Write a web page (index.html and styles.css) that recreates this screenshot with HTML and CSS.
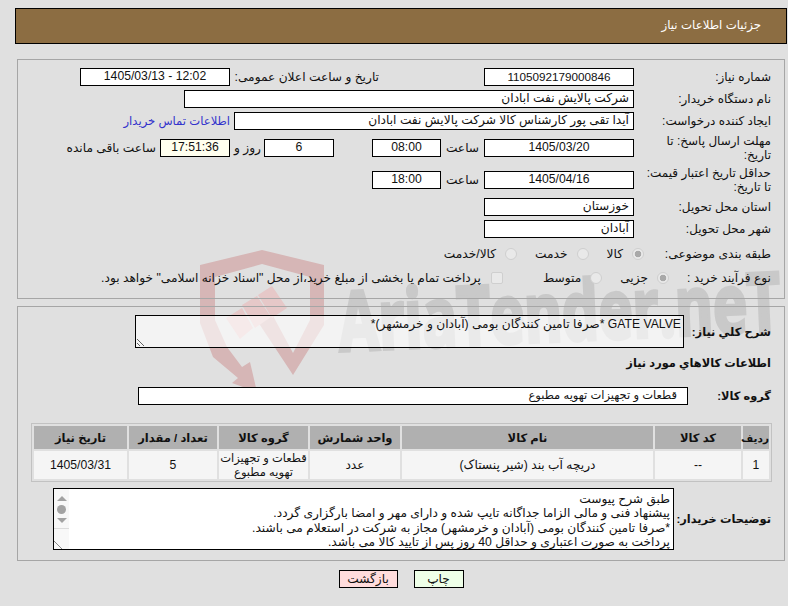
FILE: index.html
```html
<!DOCTYPE html>
<html lang="fa" dir="rtl">
<head>
<meta charset="utf-8">
<title>جزئیات اطلاعات نیاز</title>
<link rel="stylesheet" href="styles.css">
</head>
<body>
<svg class="watermark" width="788" height="606" viewBox="0 0 788 606" aria-hidden="true">
  <path class="wm-shield" d="M262 250 L324 265 L324 325 L293 375 L258 322 L272 314 L293 353 L310 320 L310 277 L262 264 L215 277 L215 320 L227 347 L242 367 L250 362 L257 392 L232 383 L238 378 L213 357 L200 323 L200 265 Z"/>
  <path class="wm-hammer" d="M226 318 L242 308 L253 328 L240 339 Z M242 305 L257 296 L271 317 L255 328 Z M258 295 L272 286 L287 308 L272 318 Z"/>
  <text class="wm-text" x="340" y="351" transform="rotate(-2.6 340 351)" textLength="442" lengthAdjust="spacingAndGlyphs">AriaTender.neT</text>
</svg>
<main class="page">
  <header class="title-bar">جزئیات اطلاعات نیاز</header>

  <section class="panel panel-info">
    <div class="row">
      <div class="label w137">شماره نیاز:</div>
      <div class="field w150 center long-number">1105092179000846</div>
      <div class="label announce">تاریخ و ساعت اعلان عمومی:</div>
      <div class="field w150 center announce-value">1405/03/13 - 12:02</div>
    </div>
    <div class="row">
      <div class="label w137">نام دستگاه خریدار:</div>
      <div class="field w450">شرکت پالایش نفت ابادان</div>
    </div>
    <div class="row">
      <div class="label w137">ایجاد کننده درخواست:</div>
      <div class="field w400">آیدا تقی پور کارشناس کالا شرکت پالایش نفت ابادان</div>
      <a class="contact" href="#">اطلاعات تماس خریدار</a>
    </div>
    <div class="row tall">
      <div class="label w137">مهلت ارسال پاسخ: تا تاریخ:</div>
      <div class="field w150 center">1405/03/20</div>
      <div class="unit">ساعت</div>
      <div class="field w69 center">08:00</div>
      <div class="field w70 center days">6</div>
      <div class="unit days-unit">روز و</div>
      <div class="field w70 center timer">17:51:36</div>
      <div class="unit remain">ساعت باقی مانده</div>
    </div>
    <div class="row tall">
      <div class="label w137">حداقل تاریخ اعتبار قیمت: تا تاریخ:</div>
      <div class="field w150 center">1405/04/16</div>
      <div class="unit">ساعت</div>
      <div class="field w69 center">18:00</div>
    </div>
    <div class="row">
      <div class="label w137">استان محل تحویل:</div>
      <div class="field w150">خوزستان</div>
    </div>
    <div class="row">
      <div class="label w137">شهر محل تحویل:</div>
      <div class="field w150">آبادان</div>
    </div>
    <div class="row choice-row category">
      <div class="label choice-label-a">طبقه بندی موضوعی:</div>
      <label class="choice"><input class="radio" type="radio" name="cat" checked disabled><span>کالا</span></label>
      <label class="choice"><input class="radio" type="radio" name="cat" disabled><span>خدمت</span></label>
      <label class="choice"><input class="radio" type="radio" name="cat" disabled><span>کالا/خدمت</span></label>
    </div>
    <div class="row choice-row process">
      <div class="label choice-label-b">نوع فرآیند خرید :</div>
      <label class="choice"><input class="radio" type="radio" name="proc" checked disabled><span>جزیی</span></label>
      <label class="choice"><input class="radio" type="radio" name="proc" disabled><span>متوسط</span></label>
      <label class="choice pay"><input class="check" type="checkbox" disabled><span>پرداخت تمام یا بخشی از مبلغ خرید،از محل "اسناد خزانه اسلامی" خواهد بود.</span></label>
    </div>
  </section>

  <section class="panel panel-items">
    <div class="row need-row">
      <div class="label strong need-label">شرح کلي نياز:</div>
      <textarea class="need" readonly>GATE VALVE *صرفا تامین کنندگان بومی (آبادان و خرمشهر)*</textarea>
    </div>
    <h2 class="items-title">اطلاعات کالاهاي مورد نياز</h2>
    <div class="row group-row">
      <div class="label strong group-label">گروه کالا:</div>
      <div class="field group-field">قطعات و تجهیزات تهویه مطبوع</div>
    </div>
    <table class="items">
      <thead>
        <tr>
          <th class="c1">ردیف</th><th class="c2">کد کالا</th><th class="c3">نام کالا</th><th class="c4">واحد شمارش</th><th class="c5">گروه کالا</th><th class="c6">تعداد / مقدار</th><th class="c7">تاریخ نیاز</th>
        </tr>
      </thead>
      <tbody>
        <tr>
          <td>1</td><td>--</td><td>دریچه آب بند (شیر پنستاک)</td><td>عدد</td><td class="group-cell">قطعات و تجهیزات<br>تهویه مطبوع</td><td>5</td><td>1405/03/31</td>
        </tr>
      </tbody>
    </table>
    <div class="row desc-row">
      <div class="label strong desc-label">توضیحات خریدار:</div>
      <div class="desc">
        <div class="desc-text">طبق شرح پیوست<br>پیشنهاد فنی و مالی الزاما جداگانه تایپ شده و دارای مهر و امضا بارگزاری گردد.<br>*صرفا تامین کنندگان بومی (آبادان و خرمشهر) مجاز به شرکت در استعلام می باشند.<br>پرداخت به صورت اعتباری و حداقل 40 روز پس از تایید کالا می باشد.</div>
        <div class="scrollbar">
          <span class="arrow-up"></span>
          <span class="thumb"></span>
          <span class="arrow-down"></span>
          <span class="grip"></span>
        </div>
      </div>
    </div>
  </section>

  <div class="actions">
    <button class="btn print" type="button">چاپ</button>
    <button class="btn back" type="button">بازگشت</button>
  </div>
</main>
</body>
</html>
```
FILE: styles.css
```css
* { box-sizing: border-box; }
html, body { margin: 0; padding: 0; }
body {
  background: #e0e0e0;
  color: #111;
  font-family: "Liberation Sans", "DejaVu Sans", sans-serif;
  font-size: 12.2px;
  line-height: 14px;
  width: 788px;
  height: 606px;
  overflow: hidden;
  position: relative;
}
.watermark { position: absolute; left: 0; top: 0; z-index: 0; }
.wm-shield { fill: #d6b6b6; }
.wm-hammer { fill: #e6c8c8; }
.wm-text { fill: #c9c9c9; stroke: #c9c9c9; stroke-width: 4px; font-family: "Open Sans", sans-serif; font-weight: 700; font-size: 82px; direction: ltr; }
.page { position: relative; z-index: 1; }

.title-bar {
  margin: 8px 1px 0 15px;
  height: 36px;
  background: #8c6d42;
  border: 1px solid #000;
  color: #fff;
  padding-right: 25px;
  line-height: 33px;
  font-size: 11.8px;
}
.panel { border: 1px solid #a6a6a6; margin: 0 3px 0 17px; padding: 0 13px 0 0; }
.panel-info { margin-top: 15px; height: 240px; padding-top: 8px; }
.panel-items { margin-top: 7px; height: 255px; padding-top: 8px; }

.row { display: flex; align-items: center; min-height: 18px; margin-bottom: 4px; }
.row.tall { min-height: 28px; }
.label { flex: none; }
.w137 { width: 137px; padding-left: 8px; font-size: 12px; }
.field {
  flex: none;
  height: 18px;
  background: #fff;
  border: 1px solid #000;
  line-height: 15px;
  padding: 0 4px;
  white-space: nowrap;
  overflow: hidden;
}
.center { text-align: center; }
.long-number { font-size: 11.7px; }
.w150 { width: 150px; }
.w400 { width: 400px; }
.w450 { width: 450px; }
.w69 { width: 69px; }
.w70 { width: 70px; }
.announce { margin-right: 105px; width: 149px; white-space: nowrap; }
.announce-value { direction: ltr; }
.contact { color: #3333cc; text-decoration: none; margin-right: 4px; white-space: nowrap; font-size: 11.6px; }
.unit { width: 43px; text-align: center; flex: none; white-space: nowrap; }
.days { margin-right: 38px; }
.days-unit { width: 34px; text-align: right; padding-right: 3px; }
.timer { background: #ffffef; }
.remain { width: 94px; text-align: right; padding-right: 4px; }

.choice-row { margin-bottom: 0; }
.category { height: 24px; margin-top: 1px; }
.process { height: 24px; }
.choice-label-a { width: 127px; white-space: nowrap; }
.choice-label-b { width: 102px; white-space: nowrap; }
.choice { display: flex; align-items: center; gap: 9px; margin-left: 18px; white-space: nowrap; }
.pay { margin-right: 22px; margin-left: 0; gap: 10px; }
.radio, .check {
  appearance: none;
  margin: 0;
  flex: none;
  width: 12px;
  height: 12px;
  border: 1px solid #cfcfcf;
  background: #e9e9e9;
}
.radio { border-radius: 50%; }
.radio:checked { background: radial-gradient(circle, #a9a9a9 0 3px, #e9e9e9 3.6px); }
.check { border-radius: 2px; }

.need-row { margin-bottom: 0; min-height: 33px; }
.need-label { width: 87px; white-space: nowrap; }
.need {
  display: block;
  width: 549px;
  height: 33px;
  margin: 0;
  padding: 1px 2px;
  border: 1px solid #000;
  border-radius: 0;
  background: rgba(255, 255, 255, 0.62);
  color: #111;
  font: inherit;
  outline: 0;
}
.strong { font-weight: 700; font-size: 11.4px; }
.items-title { margin: 8px 0 0; font-size: 11.4px; font-weight: 700; line-height: 14px; }
.group-row { margin: 17px 0 0; }
.group-label { width: 83px; }
.group-field { width: 550px; padding-right: 10px; font-size: 11.5px; }

.items {
  width: 740px;
  margin: 18px -1px 0 0;
  border: 1px solid #c2c2c2;
  border-spacing: 2px;
  table-layout: fixed;
}
.items th { background: #b0b0b0; height: 23px; padding: 0; font-weight: 700; font-size: 11.5px; }
.items td { background: #f5f5f5; height: 28px; padding: 0; text-align: center; }
.items .group-cell { font-size: 11.5px; white-space: nowrap; }
.items .c1 { font-size: 10.5px; }
.c1 { width: 26px; } .c2 { width: 86px; } .c3 { width: 251px; } .c4 { width: 90px; }
.c5 { width: 89px; } .c6 { width: 88px; } .c7 { width: 93px; }

.desc-row { margin: 6px 0 0; }
.desc-label { width: 97px; white-space: nowrap; }
.desc {
  display: flex;
  width: 621px;
  height: 62px;
  background: #fff;
  border: 1px solid #000;
  overflow: hidden;
}
.desc-text { flex: 1; padding: 3px 3px 0 0; white-space: nowrap; overflow: hidden; line-height: 14.4px; }
.scrollbar {
  flex: none;
  width: 15px;
  background: #f8f8f8;
  display: flex;
  flex-direction: column;
  align-items: center;
  padding-top: 7px;
}
.arrow-up { border: 5px solid transparent; border-top: 0; border-bottom: 5px solid #a3a3a3; }
.thumb { width: 9px; height: 9px; border-radius: 50%; background: #a3a3a3; margin: 4px 0; }
.arrow-down { border: 5px solid transparent; border-bottom: 0; border-top: 5px solid #a3a3a3; }
.grip {
  align-self: stretch;
  flex: 1;
  margin-top: 5px;
  border-top: 1px solid #dcdcdc;
  background: linear-gradient(45deg, transparent 46%, #888 46% 52%, transparent 52%) 0 100% / 8px 8px no-repeat;
}

.actions { display: flex; justify-content: center; gap: 16px; margin: 9px 3px 0 17px; }
.btn {
  height: 18px;
  padding: 0;
  border: 1px solid #000;
  color: #111;
  font: inherit;
}
.print { width: 50px; background: #eeffe8; }
.back { width: 59px; background: #ffdcdc; }
```
